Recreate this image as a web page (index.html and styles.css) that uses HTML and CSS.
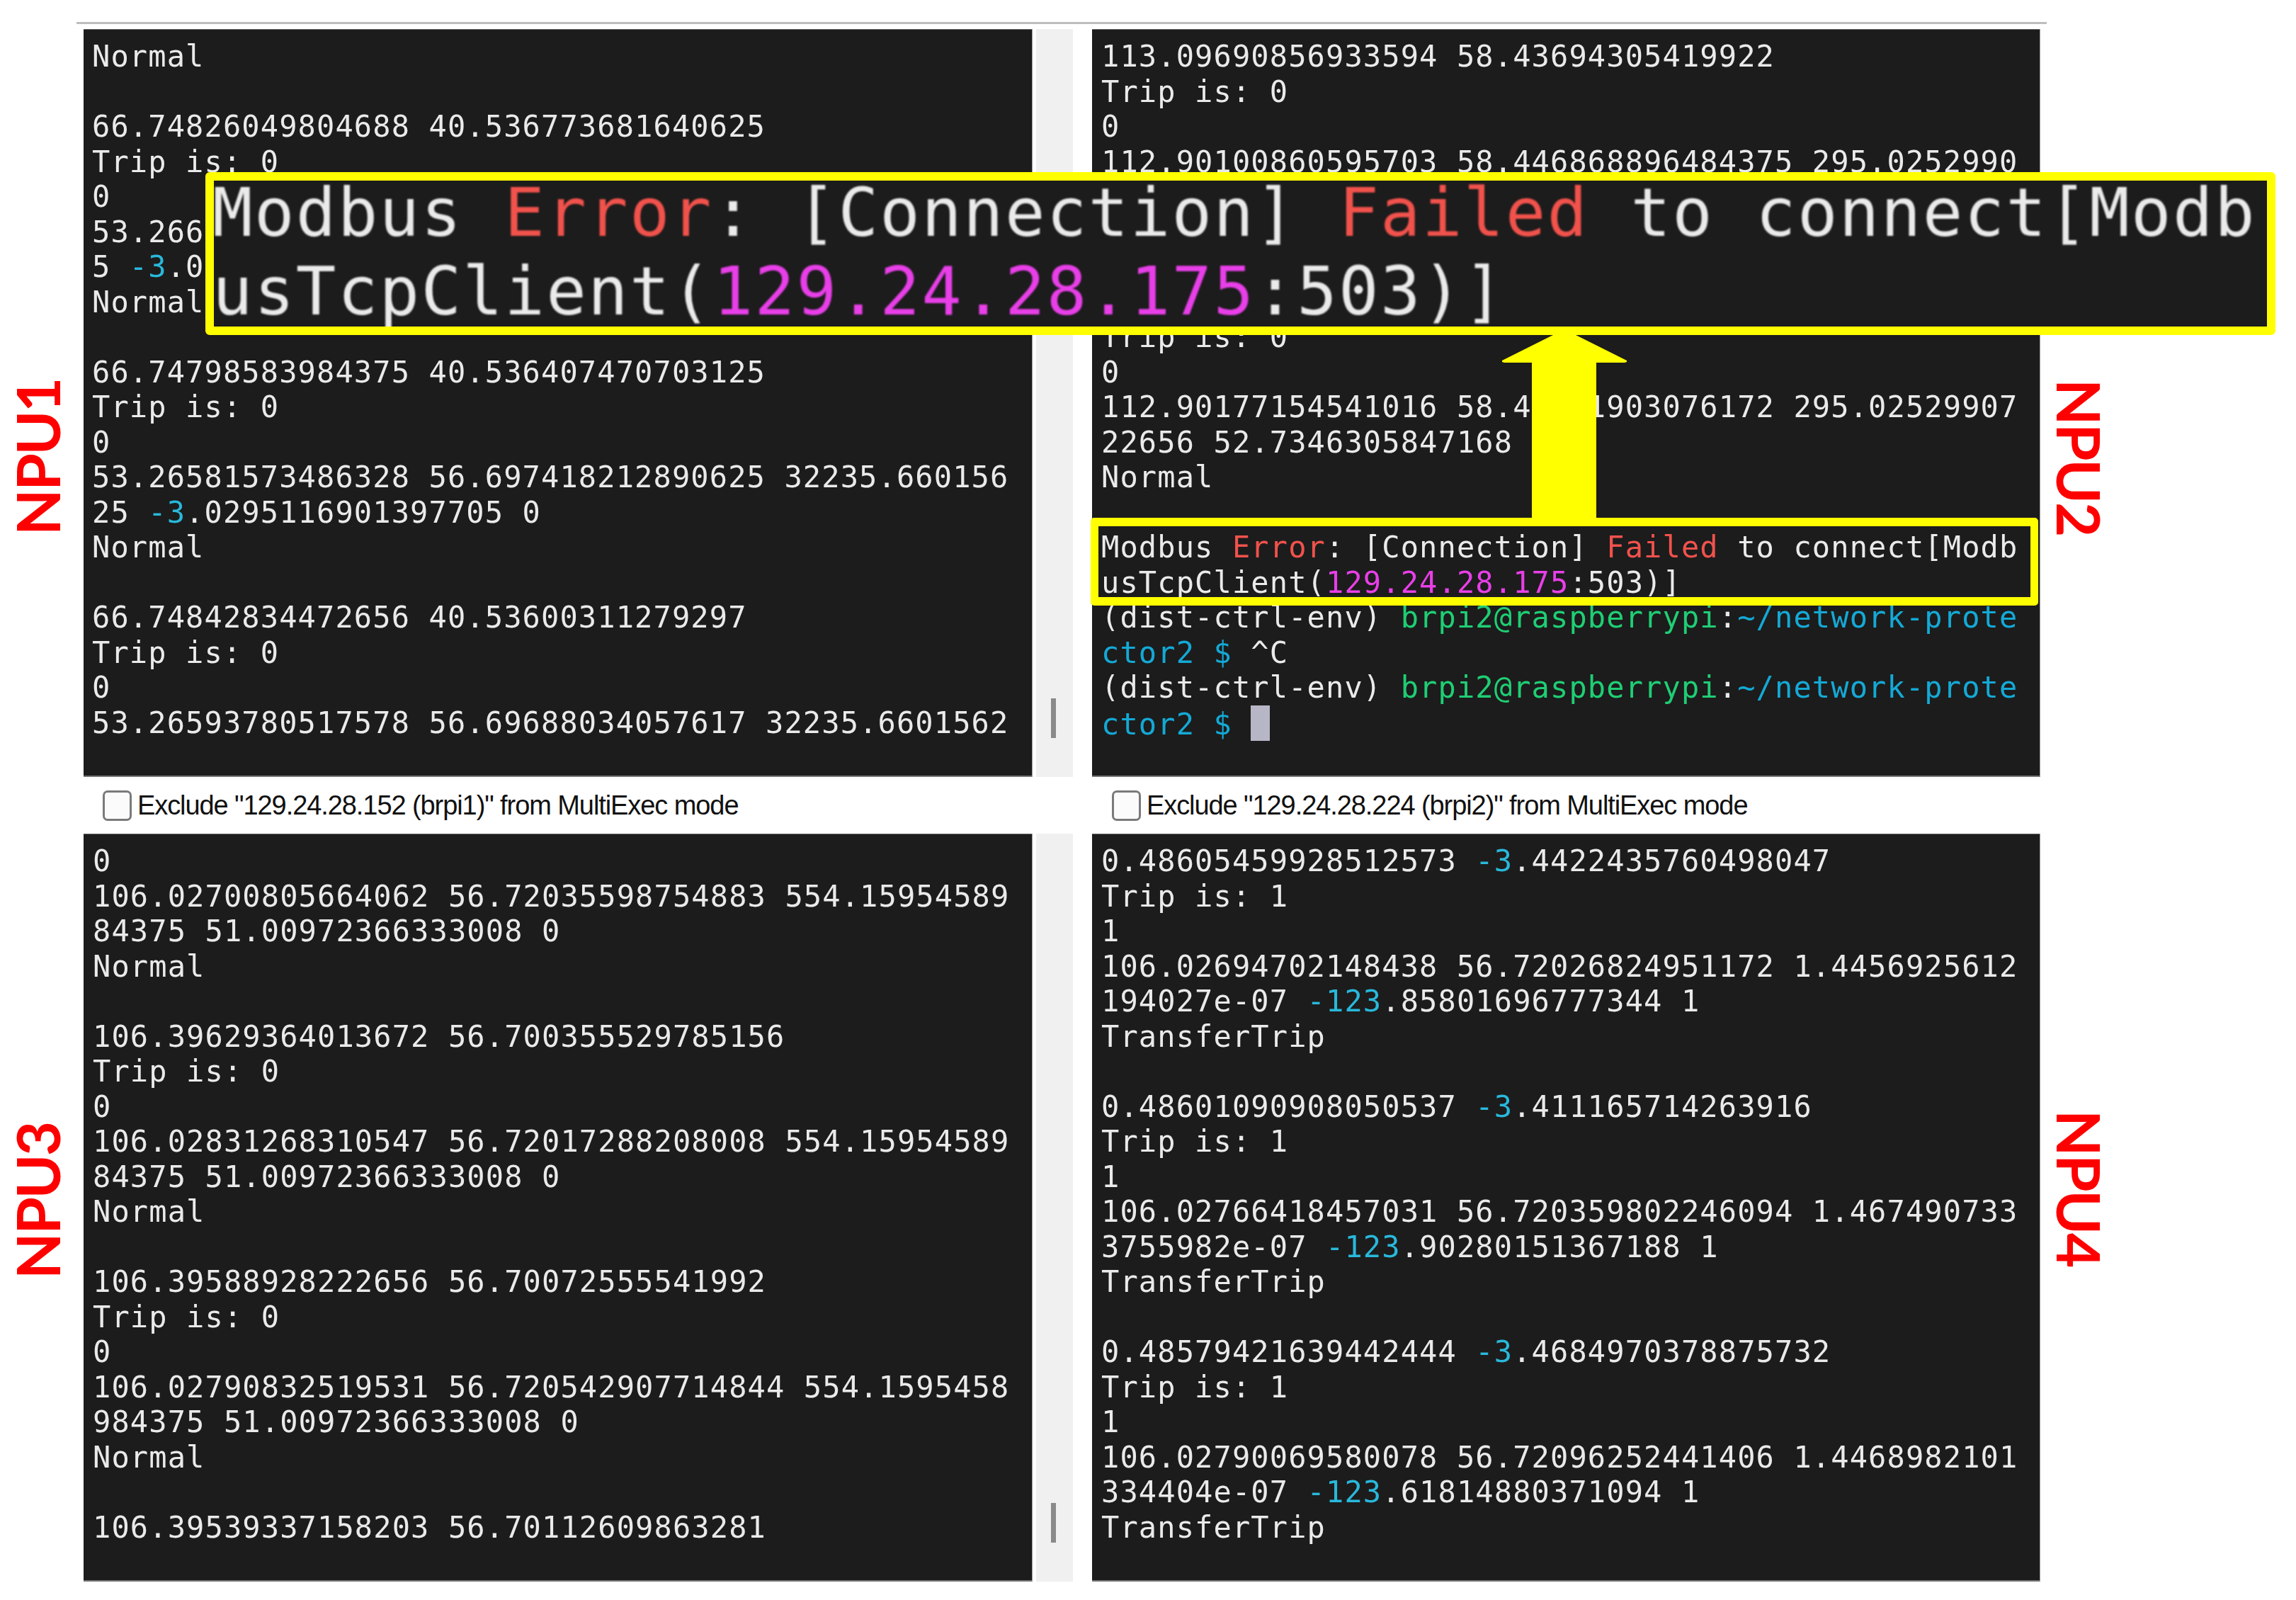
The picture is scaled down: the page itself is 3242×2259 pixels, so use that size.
FILE: index.html
```html
<!DOCTYPE html>
<html lang="en">
<head>
<meta charset="utf-8">
<title>NPU terminals</title>
<link rel="stylesheet" href="styles.css">
</head>
<body>
<main class="sheet">
<div class="rule"></div>
<div class="grid">
  <div class="label label-up label-a">NPU1</div>
  <div class="pane pane-top">
    <pre class="term">Normal

66.74826049804688 40.536773681640625
Trip is: 0
0
53.26609420776367 56.69741821289062 32235.6601562
5 <span class="cy">-3</span>.0295116901397705 0
Normal

66.74798583984375 40.536407470703125
Trip is: 0
0
53.26581573486328 56.697418212890625 32235.660156
25 <span class="cy">-3</span>.0295116901397705 0
Normal

66.74842834472656 40.53600311279297
Trip is: 0
0
53.26593780517578 56.69688034057617 32235.6601562</pre>
    <div class="gutter"><span class="thumb"></span></div>
  </div>
  <pre class="term term-b term-top">113.09690856933594 58.43694305419922
Trip is: 0
0
112.90100860595703 58.446868896484375 295.0252990
22656 52.7346305847168
Normal

113.09690856933594 58.43694305419922
Trip is: 0
0
112.90177154541016 58.44451903076172 295.02529907
22656 52.7346305847168
Normal

Modbus <span class="rd">Error</span>: [Connection] <span class="rd">Failed</span> to connect[Modb
usTcpClient(<span class="mg">129.24.28.175</span>:503)]
(dist-ctrl-env) <span class="gr">brpi2@raspberrypi</span>:<span class="bl">~/network-prote
ctor2 $</span> ^C
(dist-ctrl-env) <span class="gr">brpi2@raspberrypi</span>:<span class="bl">~/network-prote
ctor2 $</span> <span class="cursor"></span></pre>
  <div class="label label-down label-b">NPU2</div>

  <div class="check"><input class="box" type="checkbox"><span>Exclude "129.24.28.152 (brpi1)" from MultiExec mode</span></div>
  <div class="check check-b"><input class="box" type="checkbox"><span>Exclude "129.24.28.224 (brpi2)" from MultiExec mode</span></div>

  <div class="label label-up label-c">NPU3</div>
  <div class="pane pane-bottom">
    <pre class="term term-c">0
106.02700805664062 56.72035598754883 554.15954589
84375 51.00972366333008 0
Normal

106.39629364013672 56.700355529785156
Trip is: 0
0
106.02831268310547 56.72017288208008 554.15954589
84375 51.00972366333008 0
Normal

106.39588928222656 56.70072555541992
Trip is: 0
0
106.02790832519531 56.720542907714844 554.1595458
984375 51.00972366333008 0
Normal

106.39539337158203 56.70112609863281</pre>
    <div class="gutter"><span class="thumb"></span></div>
  </div>
  <pre class="term term-b term-bottom">0.48605459928512573 <span class="cy">-3</span>.4422435760498047
Trip is: 1
1
106.02694702148438 56.72026824951172 1.4456925612
194027e-07 <span class="cy">-123</span>.85801696777344 1
TransferTrip

0.48601090908050537 <span class="cy">-3</span>.411165714263916
Trip is: 1
1
106.02766418457031 56.720359802246094 1.467490733
3755982e-07 <span class="cy">-123</span>.90280151367188 1
TransferTrip

0.48579421639442444 <span class="cy">-3</span>.4684970378875732
Trip is: 1
1
106.02790069580078 56.72096252441406 1.4468982101
334404e-07 <span class="cy">-123</span>.61814880371094 1
TransferTrip</pre>
  <div class="label label-down label-d">NPU4</div>
</div>

<svg class="arrow" viewBox="0 0 178 266" aria-hidden="true"><polygon points="89,0 177,44 177,46 174,47 134,47 134,266 43,266 43,47 4,47 1,46 1,44"/></svg>
<div class="mark"></div>
<div class="zoomed">
  <pre class="zoomed-text">Modbus <span class="rd">Error</span>: [Connection] <span class="rd">Failed</span> to connect[Modb
usTcpClient(<span class="mg">129.24.28.175</span>:503)]</pre>
</div>
</main>
</body>
</html>
```
FILE: styles.css
```css
html, body {
  margin: 0;
  background: #fff;
}

.sheet {
  position: relative;
  width: 3242px;
  height: 2259px;
  overflow: hidden;
  padding-top: 31px;
  box-sizing: border-box;
}

.rule {
  height: 3px;
  width: 2782px;
  margin: 0 0 7px 108px;
  background: #bdbdbd;
}

.grid {
  display: grid;
  grid-template-columns: 118px 1424px 1338px 1fr;
  grid-template-rows: 1056px 80px 1056px;
}

.pane {
  display: flex;
  align-items: stretch;
  min-width: 0;
  grid-column: 2;
}

.pane-top { grid-row: 1; }
.pane-bottom { grid-row: 3; }

.term {
  margin: 0;
  box-sizing: border-box;
  height: 1056px;
  width: 1339px;
  flex: none;
  padding: 13px 0 0 12px;
  background: #1c1c1c;
  border-top: 1px solid #666;
  border-bottom: 2px solid #777;
  color: #eaeaea;
  font: 42px/49.5px "DejaVu Sans Mono", monospace;
  letter-spacing: 1.13px;
  white-space: pre;
  overflow: hidden;
  box-shadow: 1px 0 0 #999;
  filter: blur(0.6px);
}

.term-b {
  width: 1338px;
  padding-left: 13px;
  grid-column: 3;
}

.term-top { grid-row: 1; }
.term-bottom { grid-row: 3; }

.term-c {
  padding-left: 13px;
}

.gutter {
  display: flex;
  justify-content: center;
  align-items: flex-end;
  box-sizing: border-box;
  width: 52px;
  margin: 0 27px 0 6px;
  padding: 0 4px 55px 0;
  background: #f0f0f0;
}

.thumb {
  width: 7px;
  height: 56px;
  background: #8a8a8a;
}

.cy { color: #29b8db; }
.rd { color: #f1524c; }
.mg { color: #e83fe8; }
.gr { color: #1fce74; }
.bl { color: #14a9d6; }

.cursor {
  display: inline-block;
  width: 27px;
  height: 50px;
  vertical-align: -9px;
  background: #b6b6c6;
}

.check {
  display: flex;
  align-items: center;
  gap: 8px;
  grid-column: 2;
  grid-row: 2;
  padding-left: 27px;
  color: #111;
  font: 38px "Liberation Sans", Arial, sans-serif;
  letter-spacing: -1.08px;
  white-space: nowrap;
}

.check-b {
  grid-column: 3;
  padding-left: 28px;
}

.box {
  appearance: none;
  flex: none;
  box-sizing: border-box;
  width: 41px;
  height: 43px;
  margin: 0;
  background: #fbfbfb;
  border: 3px solid #7a7a7a;
  border-radius: 7px;
}

.label {
  color: #f00;
  font: 700 85px/85px Lato, "Liberation Sans", sans-serif;
  letter-spacing: -2.4px;
  writing-mode: vertical-rl;
  white-space: nowrap;
  align-self: start;
  justify-self: start;
}

.label-up {
  grid-column: 1;
  transform: rotate(180deg);
}
.label-a { grid-row: 1; margin: 494px 0 0 10px; }
.label-c { grid-row: 3; margin: 408px 0 0 10px; }
.label-down {
  grid-column: 4;
  margin-left: 14px;
}
.label-b { grid-row: 1; margin-top: 494px; }
.label-d { grid-row: 3; margin-top: 390px; }

.arrow {
  position: absolute;
  left: 2120px;
  top: 465px;
  width: 178px;
  height: 266px;
  fill: #ff0;
}

.mark {
  position: absolute;
  left: 1540px;
  top: 731px;
  width: 1338px;
  height: 124px;
  box-sizing: border-box;
  border: 12px solid #ff0;
  border-left-width: 11px;
  border-right-width: 11px;
  border-radius: 5px;
}

.zoomed {
  position: absolute;
  left: 290px;
  top: 243px;
  width: 2923px;
  height: 230px;
  box-sizing: border-box;
  border: 12px solid #ff0;
  border-radius: 6px;
  background: #1c1c1c;
  overflow: hidden;
}

.zoomed-text {
  margin: -10px 0 0 -2px;
  color: #eaeaea;
  font: 94px/111px "DejaVu Sans Mono", monospace;
  letter-spacing: 2.3px;
  white-space: pre;
  filter: blur(1.2px);
}
```
